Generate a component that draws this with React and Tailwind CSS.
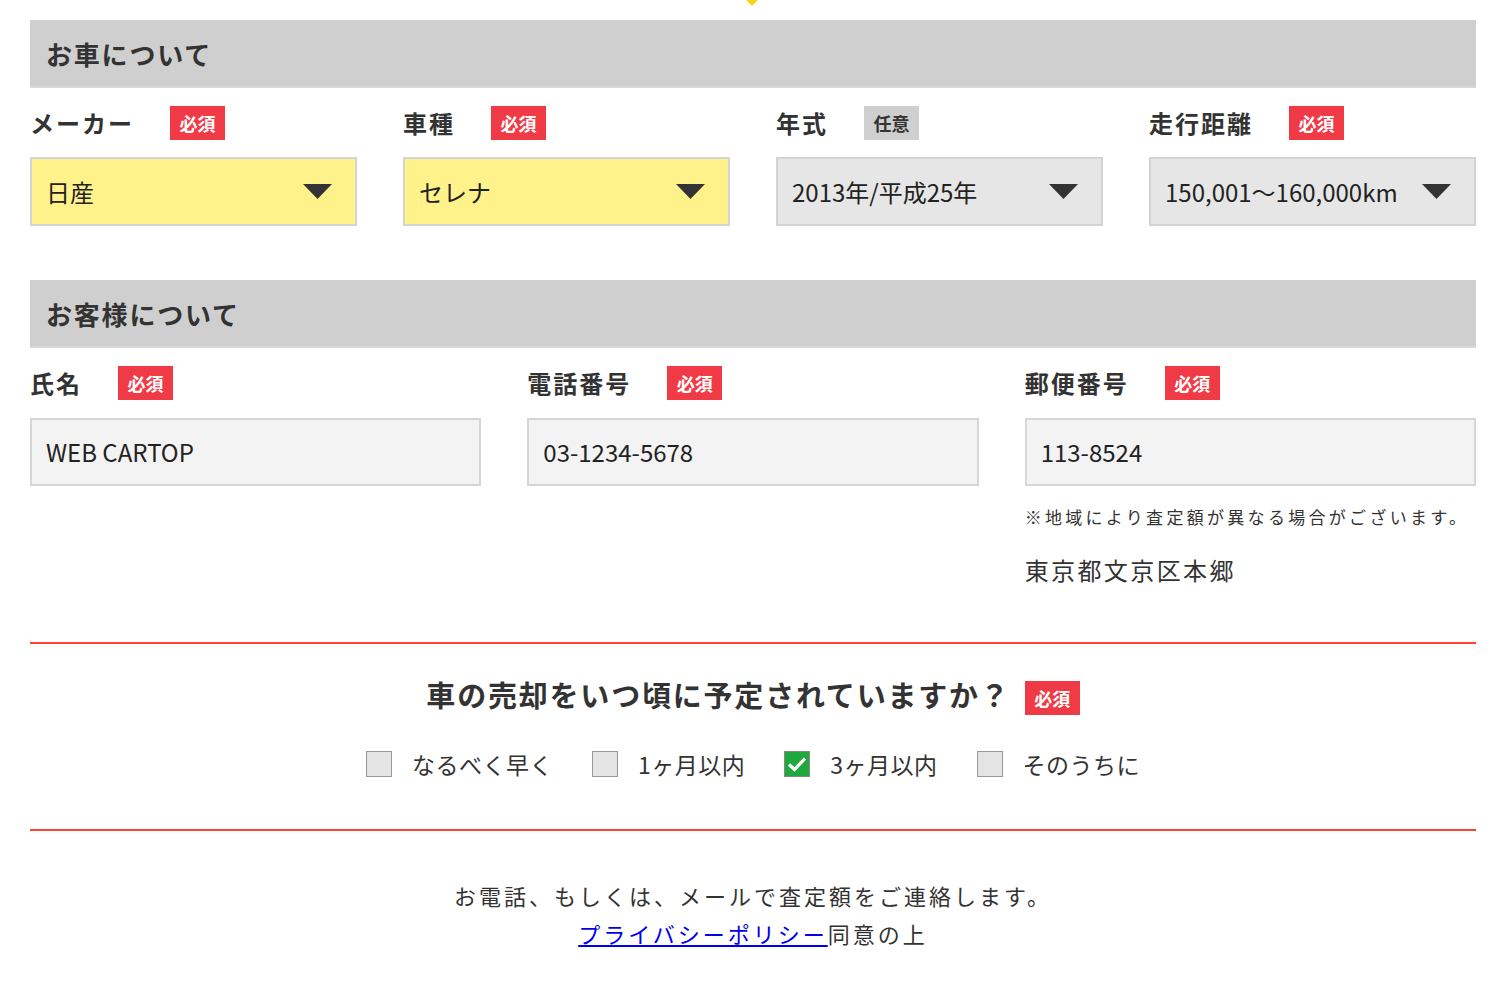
import React from "react";

const FONT = { fontFamily: '"Noto Sans CJK JP", "Noto Sans", sans-serif' };

function Badge({ optional, className = "" }) {
  return (
    <span
      className={
        "inline-flex h-[34px] w-[55px] items-center justify-center text-[18px] font-bold leading-none " +
        (optional ? "bg-[#cfcfcf] text-[#333]" : "bg-[#f03a46] text-white") +
        " " +
        className
      }
    >
      {optional ? "任意" : "必須"}
    </span>
  );
}

function Label({ text, optional }) {
  return (
    <div className="flex h-[34px] items-center gap-[36px]">
      <span className="text-[24px] font-bold tracking-[2px] text-[#333] leading-none">{text}</span>
      <Badge optional={optional} />
    </div>
  );
}

function Caret() {
  return (
    <svg width="29" height="15" viewBox="0 0 29 15" className="shrink-0">
      <path d="M0 0 H29 L14.5 15 Z" fill="#333" />
    </svg>
  );
}

function Select({ value, yellow }) {
  return (
    <div
      className={
        "flex h-[69px] items-center justify-between border-2 border-[#d4d4d4] pl-[14px] pr-[23px] text-[24px] text-[#222] " +
        (yellow ? "bg-[#fff28a]" : "bg-[#e6e6e6]")
      }
    >
      <span className="leading-none">{value}</span>
      <Caret />
    </div>
  );
}

function Input({ value }) {
  return (
    <div className="flex h-[68px] items-center border-2 border-[#d6d6d6] bg-[#f3f3f3] pl-[14px] text-[24px] text-[#222]">
      <span className="leading-none">{value}</span>
    </div>
  );
}

function Header({ text }) {
  return (
    <div className="flex h-[68px] items-center bg-[#cfcfcf] pl-[16px] border-b-2 border-[#d8d8d8]">
      <span className="mt-[2px] text-[26px] font-bold tracking-[1.8px] text-[#333] leading-none">{text}</span>
    </div>
  );
}

function Check({ label, checked }) {
  return (
    <div className="flex items-center gap-[20px]">
      {checked ? (
        <span className="flex h-[26px] w-[26px] items-center justify-center border border-[#888] bg-[#1fa83c]">
          <svg width="20" height="16" viewBox="0 0 20 16">
            <path d="M2 8.5 L7.5 13.5 L18 2.5" stroke="#fff" strokeWidth="3.2" fill="none" />
          </svg>
        </span>
      ) : (
        <span className="h-[26px] w-[26px] border border-[#999] bg-[#e4e4e4]" />
      )}
      <span className="text-[23px] tracking-[0.5px] text-[#333] leading-none">{label}</span>
    </div>
  );
}

export default function App() {
  return (
    <div style={FONT} className="min-h-[1000px] w-[1500px] bg-white px-[30px] pr-[24px]">
      <div className="flex h-[6px] justify-center">
        <svg width="18" height="6" viewBox="0 0 18 6" className="ml-[-2px]">
          <path d="M3 0 H15 L9 6 Z" fill="#f7d51c" />
        </svg>
      </div>

      <div className="mt-[14px]">
        <Header text="お車について" />
      </div>

      <div className="mt-[18px] grid grid-cols-4 gap-x-[46px]">
        <div>
          <Label text="メーカー" />
          <div className="mt-[17px]">
            <Select value="日産" yellow />
          </div>
        </div>
        <div>
          <Label text="車種" />
          <div className="mt-[17px]">
            <Select value="セレナ" yellow />
          </div>
        </div>
        <div>
          <Label text="年式" optional />
          <div className="mt-[17px]">
            <Select value="2013年/平成25年" />
          </div>
        </div>
        <div>
          <Label text="走行距離" />
          <div className="mt-[17px]">
            <Select value="150,001〜160,000km" />
          </div>
        </div>
      </div>

      <div className="mt-[54px]">
        <Header text="お客様について" />
      </div>

      <div className="mt-[18px] grid grid-cols-3 gap-x-[46px]">
        <div>
          <Label text="氏名" />
          <div className="mt-[18px]">
            <Input value="WEB CARTOP" />
          </div>
        </div>
        <div>
          <Label text="電話番号" />
          <div className="mt-[18px]">
            <Input value="03-1234-5678" />
          </div>
        </div>
        <div>
          <Label text="郵便番号" />
          <div className="mt-[18px]">
            <Input value="113-8524" />
          </div>
          <p className="mt-[19px] text-[17px] leading-[24px] tracking-[3.3px] text-[#333]">
            ※地域により査定額が異なる場合がございます。
          </p>
          <p className="mt-[25px] text-[24px] leading-[32px] tracking-[2.4px] text-[#333]">東京都文京区本郷</p>
        </div>
      </div>

      <div className="mt-[56px] h-[2px] bg-[#ff4433]" />

      <div className="mt-[37px] flex h-[34px] items-center justify-center">
        <span className="mb-[8px] text-[29px] font-bold tracking-[1.8px] text-[#333] leading-none">
          車の売却をいつ頃に予定されていますか？
        </span>
        <Badge className="ml-[14px] w-[53px]" />
      </div>

      <div className="mt-[36px] flex h-[26px] items-center justify-center gap-[39px]">
        <Check label="なるべく早く" />
        <Check label="1ヶ月以内" />
        <Check label="3ヶ月以内" checked />
        <Check label="そのうちに" />
      </div>

      <div className="mt-[52px] h-[2px] bg-[#ff4433]" />

      <div className="mt-[45px] text-center text-[22px] leading-[38px] tracking-[3px] text-[#333]">
        <p>お電話、もしくは、メールで査定額をご連絡します。</p>
        <p>
          <a href="#" className="text-[#0000ee] underline">
            プライバシーポリシー
          </a>
          同意の上
        </p>
      </div>
    </div>
  );
}
